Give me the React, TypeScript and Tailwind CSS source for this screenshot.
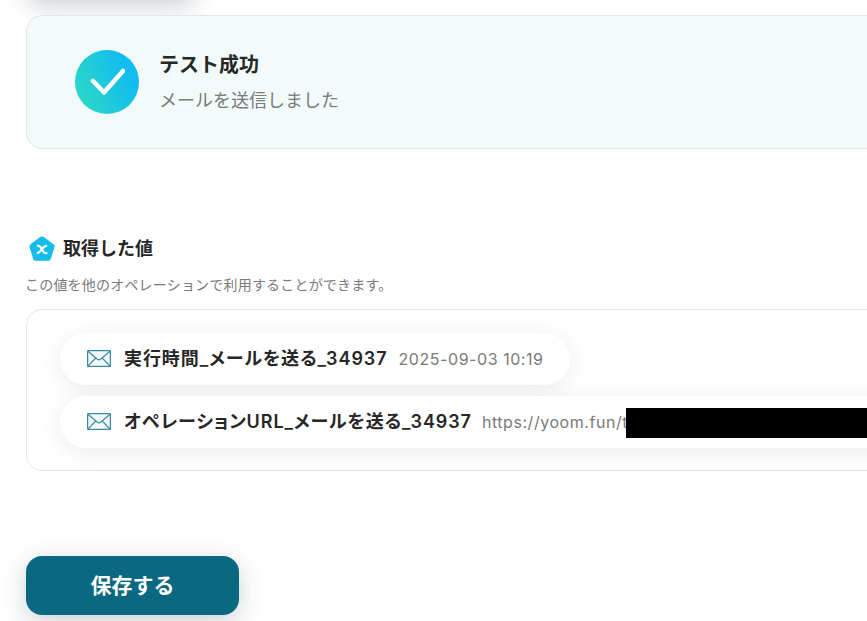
const font = { fontFamily: '"Inter", "Noto Sans CJK JP", sans-serif' };

function Mail() {
  return (
    <svg width="24" height="17" viewBox="0 0 24 17" fill="none" className="-mt-[2px] shrink-0">
      <rect x="0.6" y="0.6" width="22.8" height="15.8" rx="1" fill="#f4fafb" stroke="#3a8aa2" strokeWidth="1.3" />
      <path d="M1 1.2 L10.4 9.2 Q12 10.4 13.6 9.2 L23 1.2" stroke="#3a8aa2" strokeWidth="1.2" />
      <path d="M1 16 L8.8 8 M23 16 L15.2 8" stroke="#3a8aa2" strokeWidth="1.1" />
    </svg>
  );
}

function Pill({ label, value, extra }: { label: string; value: string; extra?: boolean }) {
  return (
    <div className={`relative flex h-[52px] items-center rounded-[26px] bg-white pl-[27px] pr-[27px] shadow-[0_4px_24px_rgba(0,0,0,0.08)] ${extra ? "w-[900px]" : "w-[510px]"}`}>
      <Mail />
      <span className={`ml-[13px] whitespace-nowrap text-[18px] font-semibold leading-none text-[#272727] [font-feature-settings:'palt'] ${extra ? "tracking-[0.9px]" : "tracking-[0.93px]"}`}>{label}</span>
      <span className={`whitespace-nowrap text-[16px] leading-none tracking-[0.55px] text-[#7a7a7a] ${extra ? "ml-[10px]" : "ml-[11px]"}`}>{value}</span>
      {extra && <div className="absolute left-[566px] top-[12px] h-[30px] w-[300px] bg-black" />}
    </div>
  );
}

export default function App() {
  return (
    <div className="h-[621px] w-[867px] overflow-hidden bg-white" style={font}>
      <div className="-mt-[59px] ml-[26px] h-[59px] w-[170px] rounded-2xl bg-white shadow-[0_6px_24px_rgba(20,40,60,0.22)]" />

      <div className="ml-[26px] mt-[15px] flex h-[134px] w-[1000px] items-center rounded-2xl border border-[#e4e7e8] bg-[#f2fbfa] pl-[48px]">
        <div className="flex h-16 w-16 items-center justify-center rounded-full bg-[linear-gradient(65deg,#30dcc0_0%,#10bcf0_80%)]">
          <svg width="36" height="28" viewBox="0 0 36 28" fill="none">
            <path d="M4 13 L15 24.5 L34 3" stroke="white" strokeWidth="4.5" strokeLinecap="round" strokeLinejoin="round" />
          </svg>
        </div>
        <div className="ml-[20px] flex flex-col">
          <span className="text-[20px] font-semibold leading-[28px] text-[#272727]">テスト成功</span>
          <span className="mt-[8px] text-[18px] leading-[27px] text-[#7a7a7a]">メールを送信しました</span>
        </div>
      </div>

      <div className="ml-[29px] mt-[86px] flex h-[28px] items-center">
        <svg width="26" height="26" viewBox="0 0 28 28" className="shrink-0">
          <path d="M12 1.2 Q14 -0.2 16 1.2 L26.4 9 Q28 10.2 27.4 12 L23.6 24.4 Q23 26.6 21 26.6 L7 26.6 Q5 26.6 4.4 24.4 L0.6 12 Q0 10.2 1.6 9 Z" fill="#16bdec" />
          <path d="M9.6 10.6 Q11.4 10.4 12.4 12 L15.6 17 Q16.8 18.8 18.8 18.4 M18.6 10.6 Q16.4 11 14 14 Q11.8 17.6 9.4 18.4" stroke="white" strokeWidth="2.3" strokeLinecap="round" fill="none" />
        </svg>
        <span className="ml-[8px] text-[18px] font-semibold leading-none text-[#272727]">取得した値</span>
      </div>
      <p className="ml-[25px] mt-[12px] text-[14px] leading-[20px] tracking-[0.2px] text-[#7a7a7a]">この値を他のオペレーションで利用することができます。</p>

      <div className="ml-[26px] mt-[14px] flex h-[162px] w-[1000px] flex-col gap-[11px] rounded-2xl border border-[#e4e7e8] bg-white pl-[33px] pt-[23px]">
        <Pill label="実行時間_メールを送る_34937" value="2025-09-03 10:19" />
        <Pill label="オペレーションURL_メールを送る_34937" value="https://yoom.fun/t" extra />
      </div>

      <button className="ml-[26px] mt-[85px] flex h-[59px] w-[213px] items-center justify-center rounded-2xl bg-[#0a6880] text-[21px] font-bold text-white shadow-[0_6px_24px_rgba(20,40,60,0.22)]">
        保存する
      </button>
    </div>
  );
}
